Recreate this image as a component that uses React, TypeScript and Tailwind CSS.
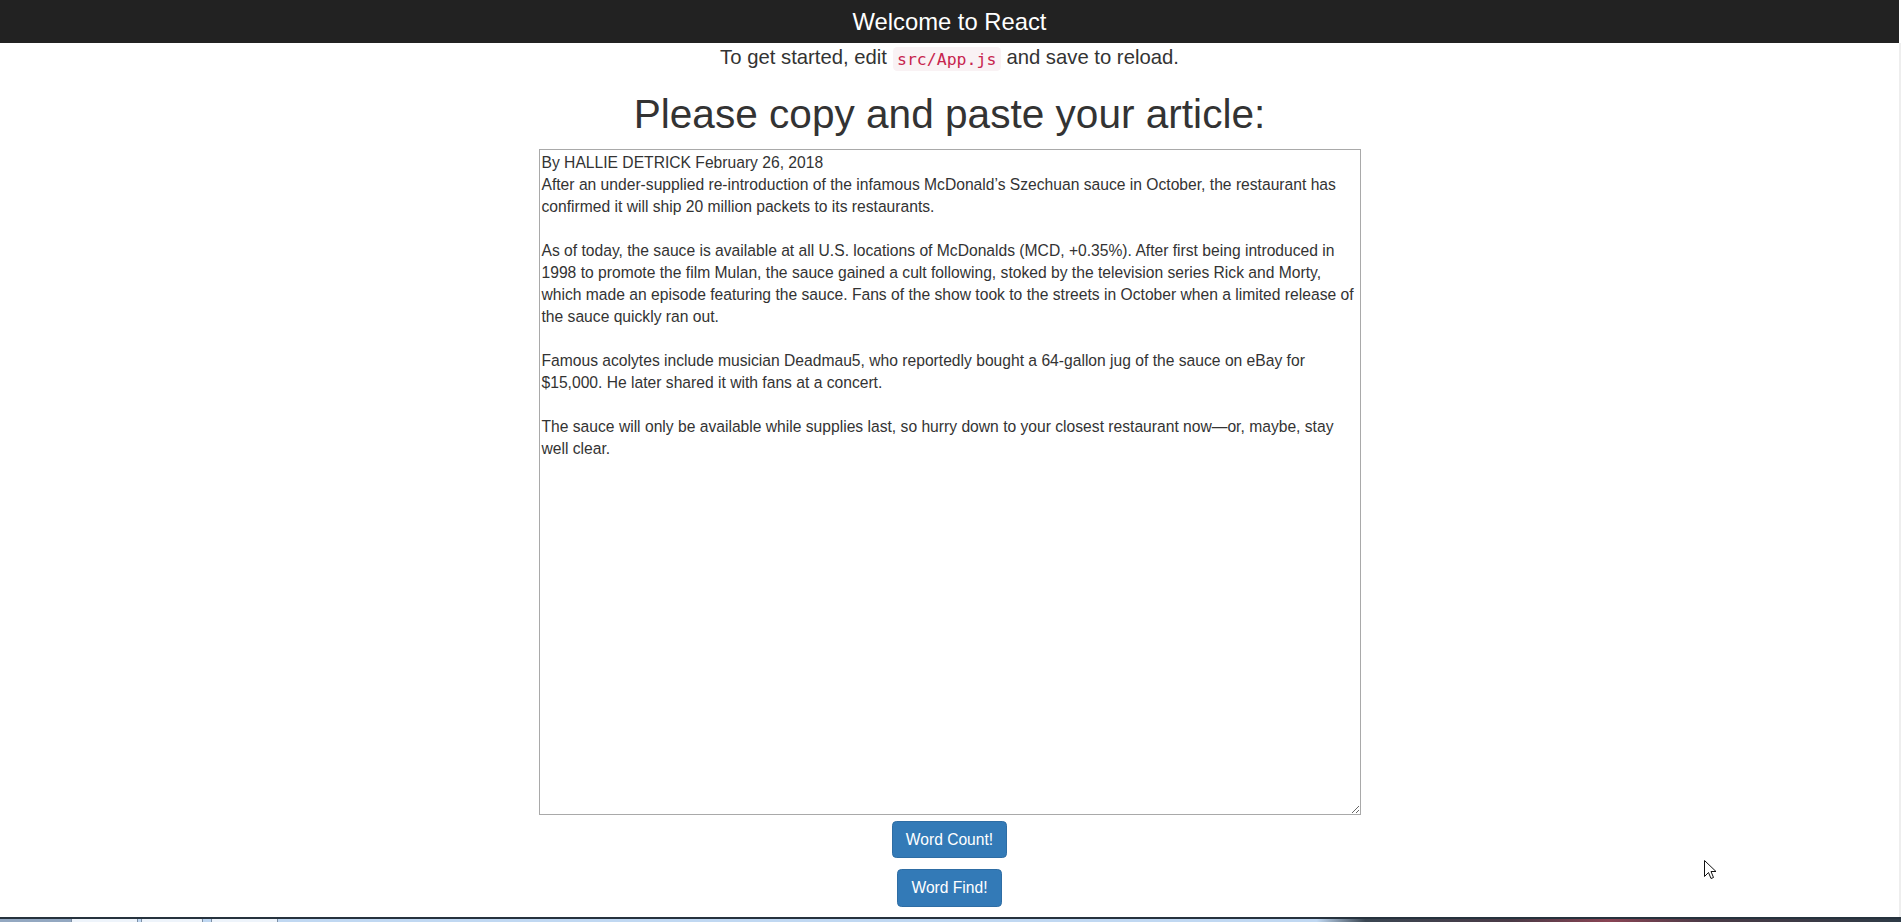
const article = `By HALLIE DETRICK February 26, 2018
After an under-supplied re-introduction of the infamous McDonald’s Szechuan sauce in October, the restaurant has confirmed it will ship 20 million packets to its restaurants.

As of today, the sauce is available at all U.S. locations of McDonalds (MCD, +0.35%). After first being introduced in 1998 to promote the film Mulan, the sauce gained a cult following, stoked by the television series Rick and Morty, which made an episode featuring the sauce. Fans of the show took to the streets in October when a limited release of the sauce quickly ran out.

Famous acolytes include musician Deadmau5, who reportedly bought a 64-gallon jug of the sauce on eBay for $15,000. He later shared it with fans at a concert.

The sauce will only be available while supplies last, so hurry down to your closest restaurant now—or, maybe, stay well clear.`;

const Cursor = () => (
  <svg
    className="absolute left-[1704px] top-[860px]"
    width="13"
    height="20"
    viewBox="0 0 13 20"
  >
    <path
      d="M0.5 0.5 L0.5 16.5 L4.5 12.5 L7 18.5 L9.5 17.5 L7 11.5 L12 11.5 Z"
      fill="#fff"
      stroke="#111"
      strokeWidth="1"
      strokeLinejoin="round"
    />
  </svg>
);

const Taskbar = () => (
  <div className="h-[5px] border-t-2 border-[#26323d] flex">
    <div className="w-[71px] bg-[#93a8c1]" />
    <div className="w-[67px] bg-[#eef4fb] border-x border-[#7d8fa5]" />
    <div className="w-[3px] bg-[#c0d8f2]" />
    <div className="w-[62px] bg-[#eef4fb] border-x border-[#7d8fa5]" />
    <div className="w-[8px] bg-[#c0d8f2]" />
    <div className="w-[67px] bg-[#eef4fb] border-x border-[#7d8fa5]" />
    <div className="flex-1 bg-[linear-gradient(to_right,#c0d8f2_0%,#c0d8f2_64%,#3a4652_67%,#4a3a46_76%,#8a4454_82%,#4a3a46_88%,#2e3a46_100%)]" />
  </div>
);

export default function App() {
  return (
    <div className="relative h-[922px] flex flex-col overflow-hidden bg-white font-['Liberation_Sans',Arial,sans-serif] text-[#333]">
      <div className="flex flex-1 min-h-0">
        <div className="flex-1 flex flex-col items-center">
          <header className="w-full h-[43px] bg-[#222] flex items-center justify-center">
            <h2 className="text-white text-[23.8px]">Welcome to React</h2>
          </header>

          <p className="h-[28.3px] text-[20.3px] leading-[28.3px]">
            To get started, edit{' '}
            <code className="font-['DejaVu_Sans_Mono',monospace] text-[16.5px] leading-[1] text-[#c7254e] bg-[#f9f2f4] px-[4.4px] py-[2.5px] rounded-[4.4px]">
              src/App.js
            </code>{' '}
            and save to reload.
          </p>

          <h1 className="mt-[21.6px] mb-[12.8px] text-[40.6px] leading-[43.5px] font-normal">
            Please copy and paste your article:
          </h1>

          <textarea
            className="block w-[822px] h-[666px] border border-[#a9a9a9] p-[2px] text-[15.65px] leading-[22px] text-[#333] outline-none"
            defaultValue={article}
          />

          <button className="mt-[6px] bg-[#337ab7] border border-[#2e6da4] rounded-[4.4px] px-[13.2px] py-[6.6px] text-[15.6px] leading-[22px] text-white">
            Word Count!
          </button>
          <button className="mt-[11px] bg-[#337ab7] border border-[#2e6da4] rounded-[4.4px] px-[13.2px] py-[6.6px] text-[15.6px] leading-[22px] text-white">
            Word Find!
          </button>
        </div>
        <div className="w-[2px] flex flex-col">
          <div className="h-[43px] bg-white" />
          <div className="flex-1 bg-[#eeeeee]" />
        </div>
      </div>

      <Taskbar />
      <Cursor />
    </div>
  );
}
